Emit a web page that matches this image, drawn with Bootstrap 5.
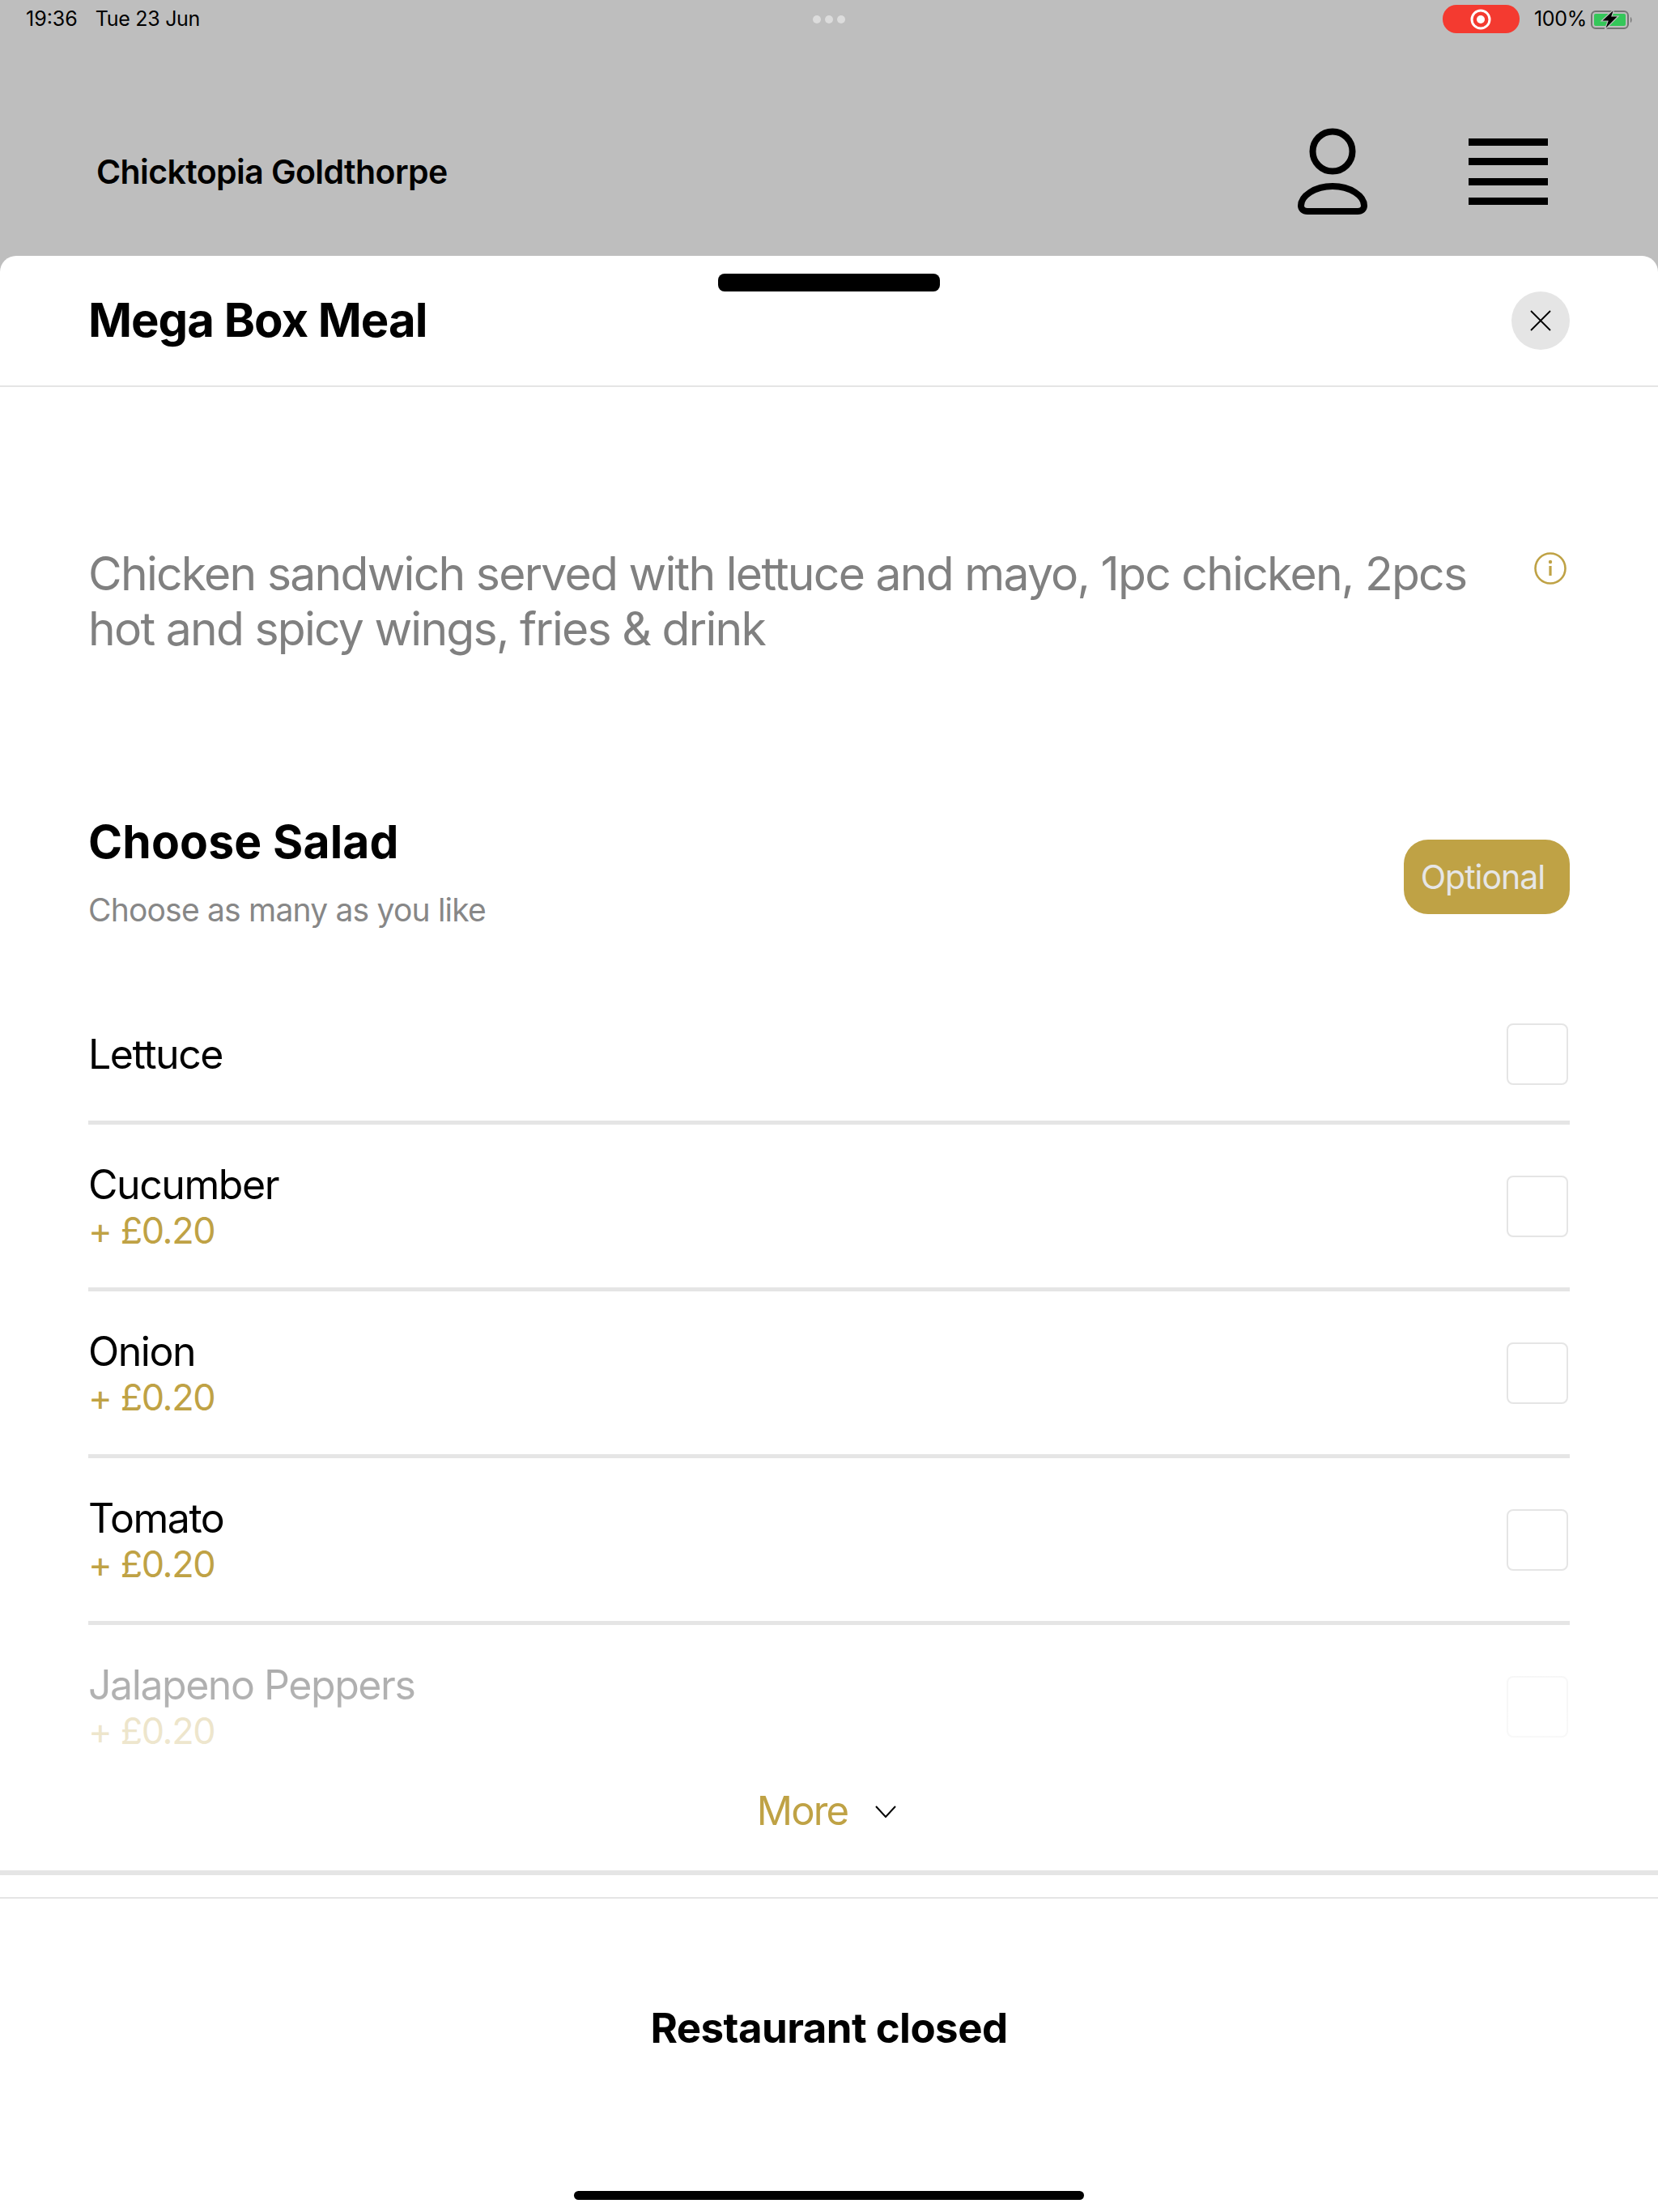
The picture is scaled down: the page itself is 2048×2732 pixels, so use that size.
<!DOCTYPE html>
<html lang="en">
<head>
<meta charset="utf-8">
<title>Mega Box Meal</title>
<link href="https://cdn.jsdelivr.net/npm/bootstrap@5.3.0/dist/css/bootstrap.min.css" rel="stylesheet">
<style>
html,body{margin:0;background:#fff;}
body{font-family:Inter,"Liberation Sans",sans-serif;color:#000;}
.app-frame{width:2048px;height:2732px;overflow:hidden;position:relative;background:#bebebe;}
.top-area{height:316px;background:#bebebe;}
.status-row{height:47px;padding:0 30px 0 32px;font-size:25px;line-height:47px;}
.status-date{margin-left:22px;letter-spacing:-.3px;}
.status-dots{position:absolute;left:1004px;top:19px;gap:5px;}
.status-dots i{display:block;width:10px;height:10px;border-radius:50%;background:#dcdcdc;}
.rec-pill{width:95px;height:35px;border-radius:17px;background:#f43a30;margin-right:1px;}
.status-pct{margin-left:17px;font-size:25px;letter-spacing:-.3px;}
.batt-icon{margin-left:4px;}
.nav-row{height:269px;padding:61px 136px 0 119px;}
.venue-name{font-size:41px;font-weight:600;letter-spacing:-.6px;margin:0;line-height:48px;}
.ham-bars{width:98px;margin-left:124px;}
.ham-bars i{display:block;height:9px;background:#000;margin-bottom:15.5px;}
.ham-bars i:last-child{margin-bottom:0;}
.sheet{background:#fff;border-radius:20px 20px 0 0;height:2416px;position:relative;}
.grab-handle{position:absolute;left:887px;top:22px;width:274px;height:22px;border-radius:8px;background:#000;}
.sheet-head{height:162px;padding:0 109px;border-bottom:2px solid #e5e5e5;}
.sheet-title{font-size:58px;font-weight:700;letter-spacing:-1px;margin:0 0 2px;line-height:70px;}
.close-disc{width:72px;height:72px;border-radius:50%;background:#e5e5e5;}
.sheet-body{padding:0 109px;}
.desc-row{padding:197px 0;}
.desc-copy{font-size:57px;line-height:68px;color:#808080;width:1730px;margin:0;letter-spacing:-1.72px;}
.info-mark{margin-top:7px;}
.group-head{margin-bottom:72px;}
.group-title{font-size:57px;font-weight:700;line-height:64px;margin:0;letter-spacing:.15px;}
.group-sub{font-size:39px;line-height:48px;color:#878787;margin:28px 0 0;letter-spacing:-.8px;}
.opt-pill{width:205px;height:92px;border-radius:30px;background:#bfa245;color:#e6e6e6;font-size:41px;margin-top:10px;padding:2px 10px 0 0;letter-spacing:-1px;}
.opt-list{height:942px;overflow:hidden;position:relative;}
.opt-row{border-bottom:5px solid #e5e5e5;min-height:206px;padding-right:2px;}
.opt-row.first-row{min-height:169px;}
.opt-text{padding-top:2px;}
.opt-name{font-size:50px;line-height:58px;letter-spacing:-1.45px;}
.opt-price{font-size:45px;line-height:56px;color:#bfa245;letter-spacing:-1.4px;}
.tick-box{width:76px;height:76px;border:2px solid #e5e5e5;border-radius:8px;background:#fff;}
.list-fade{position:absolute;left:0;right:0;bottom:0;height:130px;background:linear-gradient(to bottom,rgba(255,255,255,.66),rgba(255,255,255,.74));}
.more-row{height:148px;color:#bfa245;font-size:49px;gap:34px;letter-spacing:-1.8px;padding:2px 6px 0 0;}
.thick-rule{height:6px;background:#e5e5e5;}
.thin-rule{height:2px;background:#e5e5e5;margin-top:27px;}
.closed-label{height:320px;font-size:51px;font-weight:700;letter-spacing:-.55px;margin:0;}
.home-bar{position:absolute;left:709px;top:2390px;width:630px;height:11px;border-radius:6px;background:#000;}
</style>
</head>
<body>
<div class="app-frame">
  <div class="top-area">
    <div class="status-row d-flex align-items-center">
      <span>19:36</span><span class="status-date">Tue 23 Jun</span>
      <div class="status-dots d-flex"><i></i><i></i><i></i></div>
      <div class="ms-auto d-flex align-items-center">
        <div class="rec-pill d-flex align-items-center justify-content-center">
          <svg width="26" height="26" viewBox="0 0 26 26"><circle cx="13" cy="13" r="11" fill="none" stroke="#fff" stroke-width="3"/><circle cx="13" cy="13" r="5" fill="#fff"/></svg>
        </div>
        <span class="status-pct">100%</span>
        <svg class="batt-icon" width="54" height="26" viewBox="0 0 54 26"><rect x="2" y="3" width="45" height="21" rx="5" fill="none" stroke="#737373" stroke-width="2"/><rect x="5" y="6" width="39" height="15" rx="2" fill="#34c759"/><path d="M50 10c2 1 2 6 0 7z" fill="#737373"/><path d="M30 0L14 15h8l-4 11 17-17h-8z" fill="#000" stroke="#bebebe" stroke-width="1.2"/></svg>
      </div>
    </div>
    <div class="nav-row d-flex align-items-center">
      <h1 class="venue-name">Chicktopia Goldthorpe</h1>
      <div class="ms-auto d-flex align-items-center">
        <svg width="88" height="110" viewBox="0 0 88 110"><circle cx="44" cy="30" r="24.5" fill="none" stroke="#000" stroke-width="8"/><path d="M44 73C22 73 5 85 5 97c0 4 3 7 8 7h62c5 0 8-3 8-7 0-12-17-24-39-24z" fill="none" stroke="#000" stroke-width="8"/></svg>
        <div class="ham-bars"><i></i><i></i><i></i><i></i></div>
      </div>
    </div>
  </div>
  <div class="sheet">
    <div class="grab-handle"></div>
    <div class="sheet-head d-flex align-items-center justify-content-between">
      <h2 class="sheet-title">Mega Box Meal</h2>
      <div class="close-disc d-flex align-items-center justify-content-center">
        <svg width="26" height="26" viewBox="0 0 26 26"><path d="M1 1l24 24M25 1L1 25" stroke="#000" stroke-width="1.8" fill="none"/></svg>
      </div>
    </div>
    <div class="sheet-body">
      <div class="desc-row d-flex justify-content-between align-items-start">
        <p class="desc-copy">Chicken sandwich served with lettuce and mayo, 1pc chicken, 2pcs hot and spicy wings, fries &amp; drink</p>
        <svg class="info-mark me-1" width="40" height="40" viewBox="0 0 40 40"><circle cx="20" cy="20" r="18.5" fill="none" stroke="#bfa245" stroke-width="2.6"/><circle cx="20" cy="12" r="2.2" fill="#bfa245"/><rect x="18.4" y="17" width="3.2" height="12" fill="#bfa245"/></svg>
      </div>
      <div class="group-head d-flex justify-content-between align-items-center">
        <div>
          <h3 class="group-title">Choose Salad</h3>
          <p class="group-sub">Choose as many as you like</p>
        </div>
        <div class="opt-pill d-flex align-items-center justify-content-center">Optional</div>
      </div>
      <div class="opt-list">
        <div class="opt-row first-row d-flex align-items-center justify-content-between">
          <div class="opt-name">Lettuce</div><div class="tick-box"></div>
        </div>
        <div class="opt-row d-flex align-items-center justify-content-between">
          <div class="opt-text"><div class="opt-name">Cucumber</div><div class="opt-price">+ £0.20</div></div><div class="tick-box"></div>
        </div>
        <div class="opt-row d-flex align-items-center justify-content-between">
          <div class="opt-text"><div class="opt-name">Onion</div><div class="opt-price">+ £0.20</div></div><div class="tick-box"></div>
        </div>
        <div class="opt-row d-flex align-items-center justify-content-between">
          <div class="opt-text"><div class="opt-name">Tomato</div><div class="opt-price">+ £0.20</div></div><div class="tick-box"></div>
        </div>
        <div class="opt-row d-flex align-items-center justify-content-between">
          <div class="opt-text"><div class="opt-name">Jalapeno Peppers</div><div class="opt-price">+ £0.20</div></div><div class="tick-box"></div>
        </div>
        <div class="list-fade"></div>
      </div>
      <div class="more-row d-flex align-items-center justify-content-center">
        <span>More</span>
        <svg width="26" height="15" viewBox="0 0 26 15"><path d="M1 1l12 13L25 1" stroke="#000" stroke-width="2" fill="none"/></svg>
      </div>
    </div>
    <div class="thick-rule"></div>
    <div class="thin-rule"></div>
    <p class="closed-label d-flex align-items-center justify-content-center">Restaurant closed</p>
    <div class="home-bar"></div>
  </div>
</div>
<script src="https://cdn.jsdelivr.net/npm/bootstrap@5.3.0/dist/js/bootstrap.bundle.min.js"></script>
</body>
</html>
